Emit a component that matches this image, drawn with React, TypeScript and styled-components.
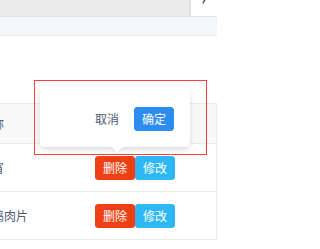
import React from 'react';
import styled, { createGlobalStyle } from 'styled-components';

const GlobalStyle = createGlobalStyle`
  html, body {
    margin: 0;
    padding: 0;
    background: #fff;
    overflow: hidden;
  }
  body {
    font-family: "Noto Sans CJK SC", "Noto Sans", sans-serif;
    font-size: 12px;
    color: #515a6e;
  }
`;

const Page = styled.div`
  position: relative;
  width: 217px;
  height: 249px;
  overflow: hidden;
`;

const TopBar = styled.div`
  display: flex;
  height: 16px;
`;

const TopGray = styled.div`
  flex: 1;
  background: #ececec;
  box-shadow: inset -2px 0 2px rgba(0, 0, 0, 0.05);
`;

const TopCorner = styled.div`
  width: 26px;
  background: #fff;
  position: relative;
`;

const Band = styled.div`
  height: 18px;
  background: #f5f6f8;
  border-top: 1px solid #e3e3e3;
  border-bottom: 1px solid #e8eaec;
`;

const Spacer = styled.div`
  height: 67px;
`;

const Table = styled.div`
  margin-left: -38px;
  width: 254px;
  border-top: 1px solid #e8eaec;
  border-right: 1px solid #e8eaec;
`;

const Row = styled.div<{ $head?: boolean }>`
  display: flex;
  align-items: center;
  height: ${p => (p.$head ? 40 : 48)}px;
  background: ${p => (p.$head ? '#f8f8f9' : '#fff')};
  border-bottom: 1px solid #e8eaec;
  box-sizing: border-box;
`;

const NameCell = styled.div`
  width: 115px;
  padding-left: 18px;
  box-sizing: border-box;
  white-space: nowrap;
  overflow: hidden;
  line-height: 18px;
`;

const ActionCell = styled.div`
  flex: 1;
  padding-left: 18px;
  display: flex;
`;

type Kind = 'error' | 'info' | 'primary' | 'text';

const kindColor = (k: Kind) =>
  k === 'error' ? '#ed4014' : k === 'info' ? '#2db7f5' : k === 'primary' ? '#2d8cf0' : 'transparent';

const Button = styled.button<{ $kind: Kind }>`
  height: 24px;
  padding: 0 7px;
  font-family: inherit;
  font-size: 12px;
  line-height: 22px;
  border-radius: 3px;
  border: 1px solid ${p => kindColor(p.$kind)};
  background: ${p => kindColor(p.$kind)};
  color: ${p => (p.$kind === 'text' ? '#515a6e' : '#fff')};
  cursor: pointer;
  margin: 0;
`;

const Poptip = styled.div`
  position: absolute;
  left: 40px;
  top: 86px;
  width: 150px;
  height: 61px;
  background: #fff;
  border-radius: 4px;
  box-shadow: 0 3px 6px -1px rgba(0, 0, 0, 0.16);
  display: flex;
  align-items: flex-end;
  justify-content: flex-end;
  gap: 7px;
  padding: 0 16px 16px 0;
  box-sizing: border-box;

  &::after {
    content: '';
    position: absolute;
    left: 71px;
    bottom: -5px;
    border-left: 6px solid transparent;
    border-right: 6px solid transparent;
    border-top: 5px solid #fff;
    filter: drop-shadow(0 1px 1px rgba(0, 0, 0, 0.08));
  }
`;

const Highlight = styled.div`
  position: absolute;
  left: 34px;
  top: 80px;
  width: 173px;
  height: 75px;
  border: 1px solid #ff3d3d;
  box-sizing: border-box;
  pointer-events: none;
`;

const rows = [{ name: '夜宵' }, { name: '烤鸡肉片' }];

const App: React.FC = () => {
  return (
    <Page>
      <GlobalStyle />
      <TopBar>
        <TopGray />
        <TopCorner>
          <svg width="26" height="16" viewBox="0 0 26 16" style={{ position: 'absolute', left: 0, top: 0 }}>
            <path d="M15 -2 L12 3" stroke="#3d4a6b" strokeWidth="1.4" strokeLinecap="round" />
          </svg>
        </TopCorner>
      </TopBar>
      <Band />
      <Spacer />
      <Table>
        <Row $head>
          <NameCell>名称</NameCell>
          <ActionCell />
        </Row>
        {rows.map(r => (
          <Row key={r.name}>
            <NameCell>{r.name}</NameCell>
            <ActionCell>
              <Button $kind="error">删除</Button>
              <Button $kind="info">修改</Button>
            </ActionCell>
          </Row>
        ))}
      </Table>
      <Poptip>
        <Button $kind="text">取消</Button>
        <Button $kind="primary">确定</Button>
      </Poptip>
      <Highlight />
    </Page>
  );
};

export default App;
